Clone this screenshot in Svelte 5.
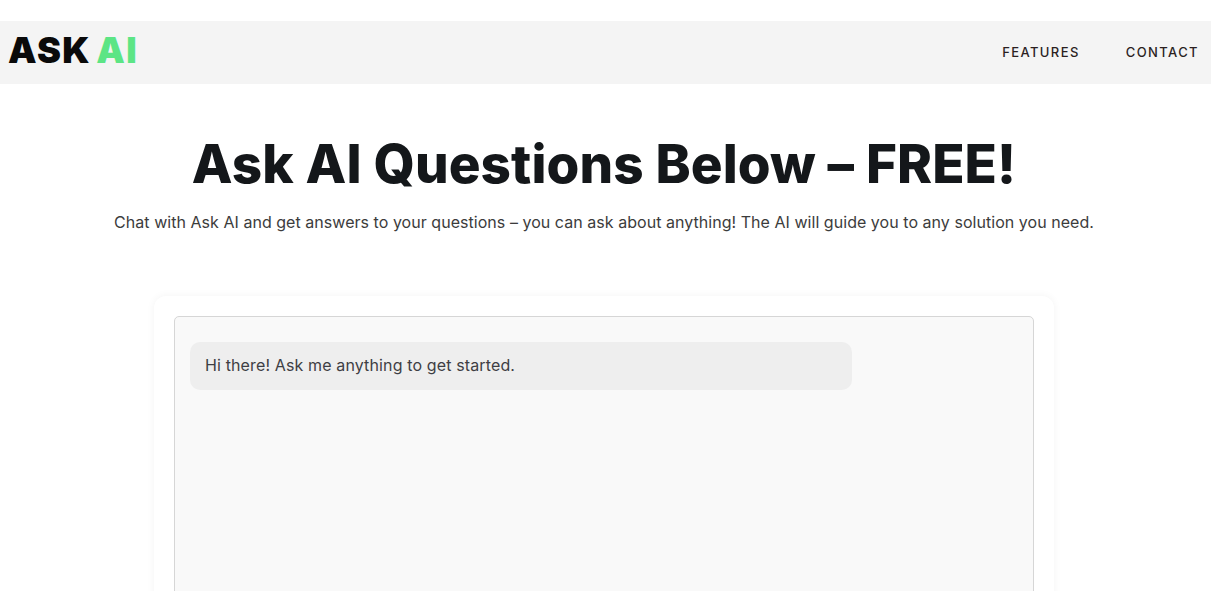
<script>
	const greeting = 'Hi there! Ask me anything to get started.';
</script>

<div class="page">
	<header class="nav">
		<a class="logo" href="#top">ASK <span class="logo-ai">AI</span></a>
		<nav class="links">
			<a href="#features">FEATURES</a>
			<a href="#contact">CONTACT</a>
		</nav>
	</header>

	<main class="content">
		<section class="intro">
			<h1>Ask AI Questions Below – FREE!</h1>
			<p>Chat with Ask AI and get answers to your questions – you can ask about anything! The AI will guide you to any solution you need.</p>
		</section>

		<section class="card">
			<div class="chat">
				<div class="bubble">{greeting}</div>
			</div>
		</section>
	</main>
</div>

<style>
	:global(body) {
		background: #fff;
		overflow: hidden;
	}

	.page {
		height: 591px;
		overflow: hidden;
		padding-top: 21px;
		box-sizing: border-box;
		font-family: Inter, 'Noto Sans', sans-serif;
	}

	.nav {
		height: 63px;
		display: flex;
		align-items: center;
		justify-content: space-between;
		padding: 0 12px 0 8px;
		background: #f4f4f4;
	}

	.logo {
		font-size: 36px;
		font-weight: 900;
		letter-spacing: 1.3px;
		word-spacing: -3px;
		color: #0a0a0a;
		text-decoration: none;
		margin-top: -5px;
	}

	.logo-ai {
		color: #5ce585;
	}

	.links {
		display: flex;
		gap: 46px;
		margin-top: -2px;
	}

	.links a {
		font-size: 13px;
		font-weight: 500;
		letter-spacing: 1.4px;
		color: #2b1f1f;
		text-decoration: none;
	}

	.content {
		padding-right: 3px;
	}

	.intro {
		text-align: center;
		padding-top: 50px;
	}

	h1 {
		margin: 0;
		font-size: 53px;
		line-height: 60px;
		font-weight: 800;
		letter-spacing: 0.1px;
		color: #14171a;
	}

	.intro p {
		margin: 16px 0 0;
		font-size: 16px;
		line-height: 24px;
		letter-spacing: 0.04px;
		color: #3c3c3c;
	}

	.card {
		width: 860px;
		margin: 62px auto 0;
		padding: 20px;
		background: #fff;
		border-radius: 12px;
		box-shadow: 0 0 8px rgba(0, 0, 0, 0.05);
	}

	.chat {
		height: 400px;
		padding: 25px 15px;
		background: #f9f9f9;
		border: 1px solid #d6d6d6;
		border-radius: 5px;
	}

	.bubble {
		width: 632px;
		padding: 12px 15px 13px;
		background: #eee;
		border-radius: 10px;
		font-size: 16px;
		line-height: 23px;
		letter-spacing: 0.13px;
		color: #3e3e44;
	}
</style>
